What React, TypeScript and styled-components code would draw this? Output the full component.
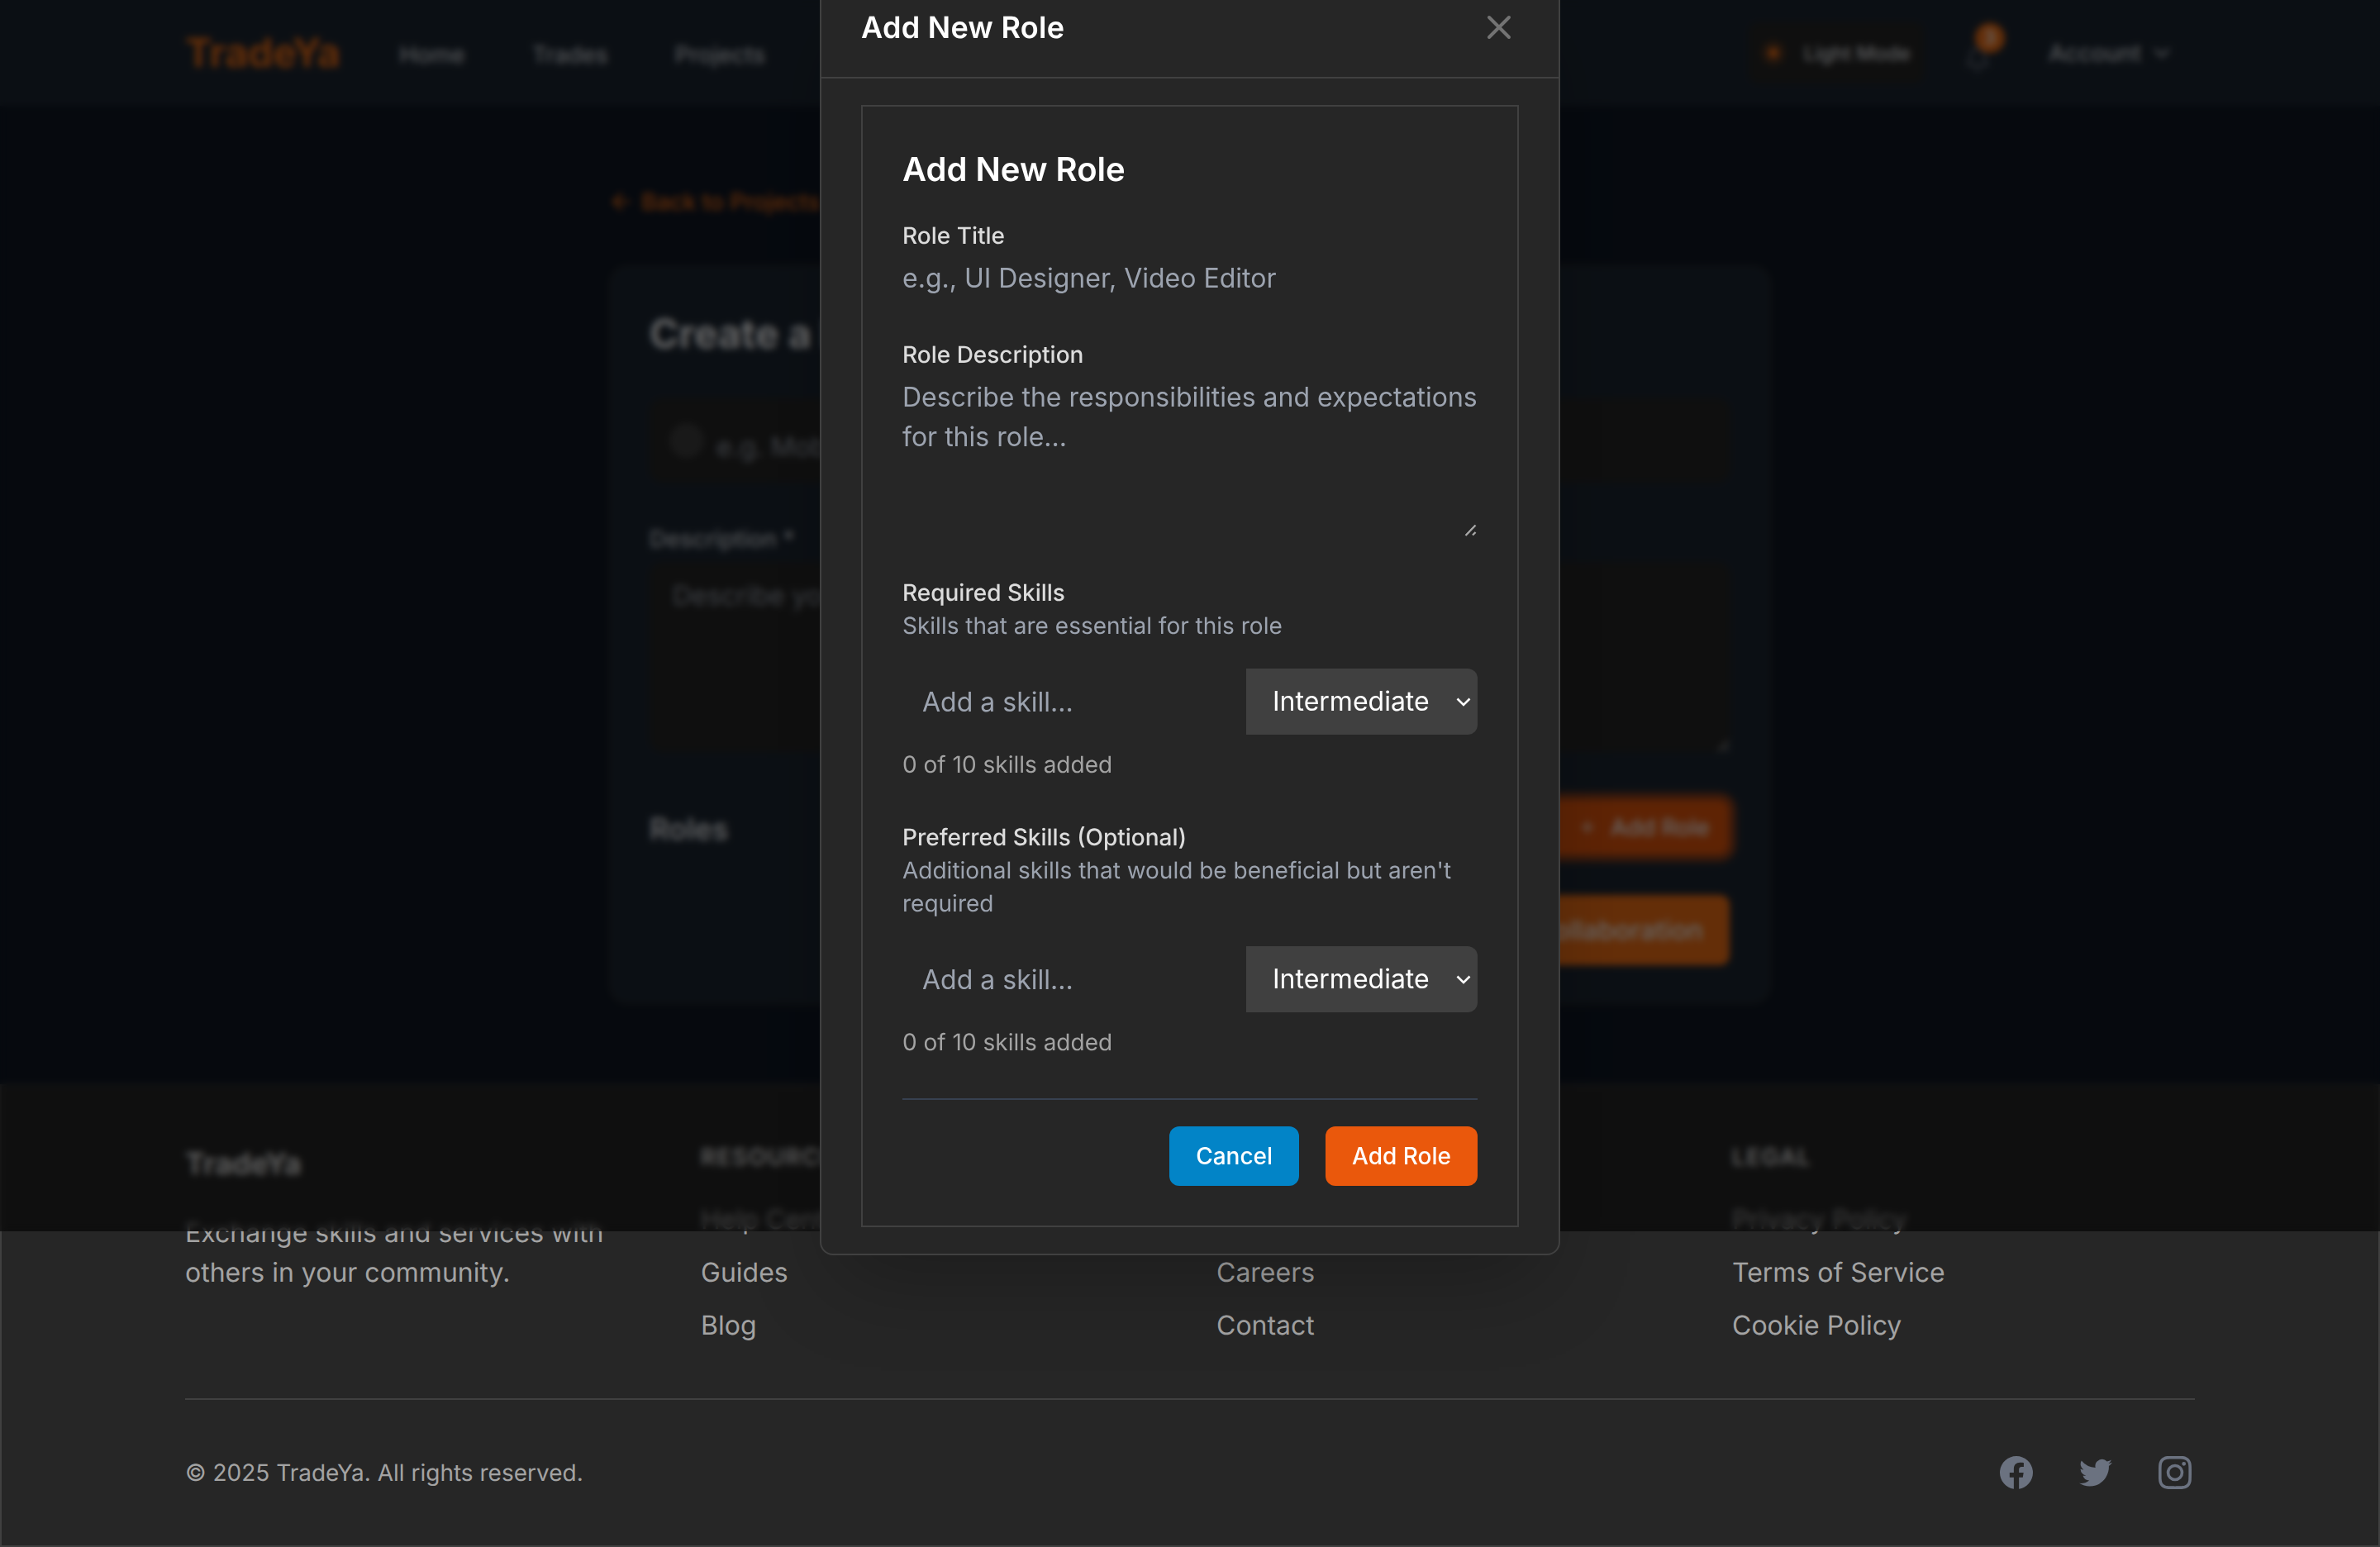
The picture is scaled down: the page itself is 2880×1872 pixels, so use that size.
import { createGlobalStyle, styled } from "styled-components";
import { ArrowLeft, Bell, ChevronDown, Plus, Sun, X } from "lucide-react";

const GlobalStyle = createGlobalStyle`
  html, body {
    margin: 0;
    padding: 0;
    background: #0f1724;
    font-family: Inter, "Liberation Sans", sans-serif;
    text-rendering: geometricPrecision;
  }
  * {
    box-sizing: border-box;
  }
`;

const Page = styled.div`
  width: 2880px;
  height: 1872px;
  display: flex;
  flex-direction: column;
  overflow: hidden;
`;

/* page behind the dialog */
const Nav = styled.header`
  height: 128px;
  flex: none;
  background: #1d2733;
  padding: 0 224px;
  display: flex;
  align-items: center;
  justify-content: space-between;
`;
const NavGroup = styled.div`
  display: flex;
  align-items: center;
`;
const Logo = styled.div`
  font-size: 48px;
  line-height: 64px;
  font-weight: 700;
  color: #f97316;
  margin-right: 72px;
`;
const NavLinks = styled.nav`
  display: flex;
  gap: 81px;
  padding-top: 4px;
`;
const NavLink = styled.a`
  font-size: 28px;
  font-weight: 500;
  line-height: 40px;
  color: #d1d5db;
`;
const ThemeButton = styled.div`
  height: 74px;
  display: flex;
  align-items: center;
  gap: 21px;
  padding: 0 16px 0 14px;
  margin-right: 49px;
  border-radius: 12px;
  background: #262626;
  color: #f97316;
  span {
    font-size: 24px;
    font-weight: 500;
    color: #e5e7eb;
  }
`;
const BellWrap = styled.div`
  position: relative;
  width: 32px;
  height: 32px;
  margin: 16px 70px 0 0;
  color: #6b7280;
`;
const Badge = styled.span`
  position: absolute;
  left: 13px;
  top: -28px;
  width: 36px;
  height: 36px;
  border-radius: 50%;
  background: #f97316;
  color: #fff;
  font-size: 22px;
  font-weight: 600;
  display: flex;
  align-items: center;
  justify-content: center;
`;
const Account = styled.div`
  display: flex;
  align-items: center;
  gap: 9px;
  margin-right: 24px;
  font-size: 28px;
  font-weight: 500;
  color: #d1d5db;
`;

const Main = styled.main`
  flex: 1;
  background: #0f1724;
  padding-top: 96px;
`;
const Column = styled.div`
  width: 1408px;
  margin: 0 auto;
`;
const BackLink = styled.a`
  display: flex;
  align-items: center;
  gap: 8px;
  height: 40px;
  margin-bottom: 56px;
  font-size: 28px;
  font-weight: 500;
  color: #f97316;
`;
const FormCard = styled.section`
  height: 896px;
  border: 2px solid #262626;
  border-radius: 24px;
  background: #1d2733;
  padding: 50px 48px 46px;
  display: flex;
  flex-direction: column;
`;
const FormTitle = styled.h1`
  margin: 0 0 46px;
  font-size: 48px;
  line-height: 64px;
  font-weight: 700;
  color: #f3f4f6;
`;
const TitleField = styled.div`
  height: 102px;
  flex: none;
  border-radius: 16px;
  background: #262626;
  display: flex;
  align-items: center;
  padding: 0 24px;
  gap: 15px;
  margin-bottom: 48px;
`;
const FieldDot = styled.span`
  width: 42px;
  height: 42px;
  flex: none;
  border-radius: 50%;
  background: #404040;
`;
const BlurredPlaceholder = styled.span`
  font-size: 32px;
  color: #9ca3af;
  padding-top: 15px;
`;
const FormLabel = styled.label`
  display: block;
  height: 40px;
  line-height: 40px;
  font-size: 28px;
  font-weight: 500;
  color: #d1d5db;
  margin-bottom: 8px;
`;
const DescriptionField = styled.div`
  position: relative;
  height: 230px;
  flex: none;
  border-radius: 16px;
  background: #262626;
  padding: 17px 28px;
  font-size: 32px;
  line-height: 48px;
  color: #9ca3af;
  margin-bottom: 58px;
`;
const RolesRow = styled.div`
  height: 66px;
  flex: none;
  display: flex;
  align-items: center;
  justify-content: space-between;
  margin-bottom: 49px;
`;
const RolesTitle = styled.h2`
  margin: 4px 0 0;
  font-size: 36px;
  font-weight: 600;
  color: #e5e7eb;
`;
const RoleButton = styled.div`
  height: 66px;
  margin-right: 2px;
  display: flex;
  align-items: center;
  gap: 16px;
  padding: 0 23px 0 37px;
  border-radius: 12px;
  background: #ea580c;
  color: #fff;
  font-size: 28px;
  font-weight: 500;
  box-shadow: 0 0 3px 9px rgba(234, 88, 12, 0.55);
`;
const SubmitRow = styled.div`
  display: flex;
  justify-content: flex-end;
`;
const SubmitButton = styled.div`
  height: 85px;
  margin-right: 1px;
  display: flex;
  align-items: center;
  padding: 0 32px;
  border-radius: 12px;
  background: #f97316;
  color: #fff;
  font-size: 32px;
  font-weight: 500;
`;

const Footer = styled.footer`
  height: 560px;
  flex: none;
  background: #262626;
  border: 2px solid #404040;
  padding: 66px 222px 0;
`;
const FooterGrid = styled.div`
  display: grid;
  grid-template-columns: repeat(4, 560px);
  gap: 64px;
  height: 248px;
`;
const FooterBrand = styled.div`
  font-size: 36px;
  line-height: 56px;
  font-weight: 700;
  color: #e5e5e5;
  margin-bottom: 32px;
`;
const FooterText = styled.p`
  margin: 0;
  font-size: 32px;
  line-height: 48px;
  color: #a3a3a3;
`;
const FooterHeading = styled.div`
  font-size: 28px;
  line-height: 40px;
  font-weight: 600;
  letter-spacing: 1.4px;
  text-transform: uppercase;
  color: #e5e5e5;
  margin-bottom: 32px;
`;
const FooterLinks = styled.div`
  display: flex;
  flex-direction: column;
  gap: 16px;
`;
const FooterLink = styled.a`
  font-size: 32px;
  line-height: 48px;
  color: #a3a3a3;
`;
const FooterBottom = styled.div`
  margin-top: 64px;
  border-top: 2px solid #404040;
  padding-top: 64px;
  display: flex;
  align-items: center;
  justify-content: space-between;
`;
const Copyright = styled.span`
  font-size: 28px;
  line-height: 48px;
  color: #a3a3a3;
`;
const Socials = styled.div`
  display: flex;
  gap: 48px;
  color: #6b7280;
  svg {
    display: block;
    width: 48px;
    height: 48px;
    fill: currentColor;
  }
`;

/* dialog */
const Overlay = styled.div`
  position: fixed;
  left: 0;
  right: 0;
  top: 0;
  height: 1490px;
  background: rgba(0, 0, 0, 0.6);
  backdrop-filter: blur(4px);
  display: flex;
  align-items: center;
  justify-content: center;
`;
const Modal = styled.div`
  width: 896px;
  flex: none;
  background: #262626;
  border: 2px solid #404040;
  border-radius: 16px;
  box-shadow: 0 50px 100px -24px rgba(0, 0, 0, 0.25);
`;
const ModalHeader = styled.div`
  display: flex;
  align-items: center;
  justify-content: space-between;
  padding: 32px 48px;
  border-bottom: 2px solid #404040;
`;
const ModalTitle = styled.h2`
  margin: 0;
  font-size: 36px;
  line-height: 56px;
  font-weight: 600;
  letter-spacing: 0.3px;
  color: #fff;
`;
const CloseButton = styled.button`
  width: 48px;
  height: 48px;
  padding: 0;
  border: 0;
  background: none;
  color: #737373;
  svg {
    display: block;
  }
`;
const ModalBody = styled.div`
  padding: 32px 48px;
`;
const RoleCard = styled.form`
  border: 2px solid #404040;
  padding: 48px;
`;
const RoleHeading = styled.h3`
  margin: 0 0 32px;
  font-size: 40px;
  line-height: 56px;
  font-weight: 600;
  color: #fff;
`;
const Field = styled.div`
  margin-bottom: 48px;
`;
const Label = styled.label<{ $tight?: boolean }>`
  display: block;
  font-size: 28px;
  line-height: 40px;
  font-weight: 500;
  color: #dcdcdc;
  margin-bottom: ${(p) => (p.$tight ? "0" : "8px")};
`;
const Hint = styled.p`
  margin: 0 0 32px;
  font-size: 28px;
  line-height: 40px;
  color: #9ca3af;
`;
const TextInput = styled.input`
  display: block;
  width: 100%;
  height: 48px;
  padding: 0;
  border: 0;
  outline: 0;
  background: transparent;
  font: 400 32px/48px Inter, sans-serif;
  color: #fff;
  &::placeholder {
    color: #9ca3af;
    opacity: 1;
  }
`;
const TextAreaWrap = styled.div`
  position: relative;
  height: 192px;
`;
const TextArea = styled.textarea`
  display: block;
  width: 100%;
  height: 192px;
  padding: 0;
  border: 0;
  outline: 0;
  resize: none;
  background: transparent;
  font: 400 32px/48px Inter, sans-serif;
  color: #fff;
  &::placeholder {
    color: #9ca3af;
    opacity: 1;
  }
`;
const ResizeGrip = styled.svg`
  position: absolute;
  right: 0;
  bottom: -1px;
  width: 16px;
  height: 16px;
`;
const SkillRow = styled.div`
  display: flex;
  height: 80px;
`;
const SkillInput = styled(TextInput)`
  flex: 1;
  min-width: 0;
  height: 80px;
  padding: 0 24px;
`;
const SelectWrap = styled.div`
  position: relative;
  width: 280px;
  flex: none;
`;
const LevelSelect = styled.select`
  display: block;
  width: 100%;
  height: 80px;
  padding: 0 0 0 32px;
  border: 0;
  outline: 0;
  appearance: none;
  border-radius: 0 12px 12px 0;
  background: #404040;
  color: #fff;
  font: 400 32px/48px Inter, sans-serif;
`;
const SelectArrow = styled.svg`
  position: absolute;
  right: 8px;
  top: 35px;
  width: 18px;
  height: 11px;
  pointer-events: none;
`;
const Count = styled.p`
  margin: 16px 0 0;
  font-size: 28px;
  line-height: 40px;
  color: #a3a3a3;
`;
const ModalActions = styled.div`
  border-top: 2px solid #374151;
  padding-top: 32px;
  display: flex;
  justify-content: flex-end;
  gap: 32px;
`;
const ActionButton = styled.button<{ $primary?: boolean }>`
  height: 72px;
  padding: 0 32px;
  border: 0;
  border-radius: 12px;
  background: ${(p) => (p.$primary ? "#ea580c" : "#0284c7")};
  color: #fff;
  font: 500 28px/40px Inter, sans-serif;
`;

const footerColumns = [
  { title: "Resources", links: ["Help Center", "Guides", "Blog"] },
  { title: "Company", links: ["About", "Careers", "Contact"] },
  { title: "Legal", links: ["Privacy Policy", "Terms of Service", "Cookie Policy"] },
];

const Grip = () => (
  <ResizeGrip viewBox="0 0 16 16" fill="none">
    <path d="M0.5 13L12.5 0.5" stroke="#171717" strokeWidth="1" />
    <path d="M1.5 14L13.5 1.5" stroke="#a8a8a8" strokeWidth="2.4" />
    <path d="M9 12.5l3.5-3.5" stroke="#171717" strokeWidth="1" />
    <path d="M10 13.5l3.5-3.5" stroke="#a8a8a8" strokeWidth="2.4" />
  </ResizeGrip>
);

const SkillFields = () => (
  <>
    <SkillRow>
      <SkillInput placeholder="Add a skill..." />
      <SelectWrap>
        <LevelSelect defaultValue="Intermediate">
          <option>Beginner</option>
          <option>Intermediate</option>
          <option>Expert</option>
        </LevelSelect>
        <SelectArrow viewBox="0 0 18 11" fill="none" stroke="#fff" strokeWidth="2.6">
          <path d="M1.5 1.5L9 9l7.5-7.5" />
        </SelectArrow>
      </SelectWrap>
    </SkillRow>
    <Count>0 of 10 skills added</Count>
  </>
);

const App = () => {
  return (
    <Page>
      <GlobalStyle />
      <Nav>
        <NavGroup>
          <Logo>TradeYa</Logo>
          <NavLinks>
            <NavLink>Home</NavLink>
            <NavLink>Trades</NavLink>
            <NavLink>Projects</NavLink>
          </NavLinks>
        </NavGroup>
        <NavGroup>
          <ThemeButton>
            <Sun size={32} fill="currentColor" />
            <span>Light Mode</span>
          </ThemeButton>
          <BellWrap>
            <Bell size={32} />
            <Badge>3</Badge>
          </BellWrap>
          <Account>
            Account
            <ChevronDown size={32} />
          </Account>
        </NavGroup>
      </Nav>

      <Main>
        <Column>
          <BackLink>
            <ArrowLeft size={32} />
            Back to Projects
          </BackLink>
          <FormCard>
            <FormTitle>Create a New</FormTitle>
            <TitleField>
              <FieldDot />
              <BlurredPlaceholder>e.g. Mobile App Development</BlurredPlaceholder>
            </TitleField>
            <FormLabel>Description *</FormLabel>
            <DescriptionField>
              Describe your
              <Grip />
            </DescriptionField>
            <RolesRow>
              <RolesTitle>Roles</RolesTitle>
              <RoleButton>
                <Plus size={24} />
                Add Role
              </RoleButton>
            </RolesRow>
            <SubmitRow>
              <SubmitButton>Create Collaboration</SubmitButton>
            </SubmitRow>
          </FormCard>
        </Column>
      </Main>

      <Footer>
        <FooterGrid>
          <div>
            <FooterBrand>TradeYa</FooterBrand>
            <FooterText>
              Exchange skills and services with
              <br />
              others in your community.
            </FooterText>
          </div>
          {footerColumns.map((col) => (
            <div key={col.title}>
              <FooterHeading>{col.title}</FooterHeading>
              <FooterLinks>
                {col.links.map((link) => (
                  <FooterLink key={link}>{link}</FooterLink>
                ))}
              </FooterLinks>
            </div>
          ))}
        </FooterGrid>
        <FooterBottom>
          <Copyright>© 2025 TradeYa. All rights reserved.</Copyright>
          <Socials>
            <svg viewBox="0 0 24 24">
              <path
                fillRule="evenodd"
                clipRule="evenodd"
                d="M22 12c0-5.523-4.477-10-10-10S2 6.477 2 12c0 4.991 3.657 9.128 8.438 9.878v-6.987h-2.54V12h2.54V9.797c0-2.506 1.492-3.89 3.777-3.89 1.094 0 2.238.195 2.238.195v2.46h-1.26c-1.243 0-1.63.771-1.63 1.562V12h2.773l-.443 2.89h-2.33v6.988C18.343 21.128 22 16.991 22 12z"
              />
            </svg>
            <svg viewBox="0 0 24 24">
              <path d="M8.29 20.251c7.547 0 11.675-6.253 11.675-11.675 0-.178 0-.355-.012-.53A8.348 8.348 0 0022 5.92a8.19 8.19 0 01-2.357.646 4.118 4.118 0 001.804-2.27 8.224 8.224 0 01-2.605.996 4.107 4.107 0 00-6.993 3.743 11.65 11.65 0 01-8.457-4.287 4.106 4.106 0 001.27 5.477A4.072 4.072 0 012.8 9.713v.052a4.105 4.105 0 003.292 4.022 4.095 4.095 0 01-1.853.07 4.108 4.108 0 003.834 2.85A8.233 8.233 0 012 18.407a11.616 11.616 0 006.29 1.84" />
            </svg>
            <svg viewBox="0 0 24 24">
              <path
                fillRule="evenodd"
                clipRule="evenodd"
                d="M12.315 2c2.43 0 2.784.013 3.808.06 1.064.049 1.791.218 2.427.465a4.902 4.902 0 011.772 1.153 4.902 4.902 0 011.153 1.772c.247.636.416 1.363.465 2.427.048 1.067.06 1.407.06 4.123v.08c0 2.643-.012 2.987-.06 4.043-.049 1.064-.218 1.791-.465 2.427a4.902 4.902 0 01-1.153 1.772 4.902 4.902 0 01-1.772 1.153c-.636.247-1.363.416-2.427.465-1.067.048-1.407.06-4.123.06h-.08c-2.643 0-2.987-.012-4.043-.06-1.064-.049-1.791-.218-2.427-.465a4.902 4.902 0 01-1.772-1.153 4.902 4.902 0 01-1.153-1.772c-.247-.636-.416-1.363-.465-2.427-.047-1.024-.06-1.379-.06-3.808v-.63c0-2.43.013-2.784.06-3.808.049-1.064.218-1.791.465-2.427a4.902 4.902 0 011.153-1.772A4.902 4.902 0 015.45 2.525c.636-.247 1.363-.416 2.427-.465C8.901 2.013 9.256 2 11.685 2h.63zm-.081 1.802h-.468c-2.456 0-2.784.011-3.807.058-.975.045-1.504.207-1.857.344-.467.182-.8.398-1.15.748-.35.35-.566.683-.748 1.15-.137.353-.3.882-.344 1.857-.047 1.023-.058 1.351-.058 3.807v.468c0 2.456.011 2.784.058 3.807.045.975.207 1.504.344 1.857.182.466.399.8.748 1.15.35.35.683.566 1.15.748.353.137.882.3 1.857.344 1.054.048 1.37.058 4.041.058h.08c2.597 0 2.917-.01 3.96-.058.976-.045 1.505-.207 1.858-.344.466-.182.8-.398 1.15-.748.35-.35.566-.683.748-1.15.137-.353.3-.882.344-1.857.048-1.055.058-1.37.058-4.041v-.08c0-2.597-.01-2.917-.058-3.96-.045-.976-.207-1.505-.344-1.858a3.097 3.097 0 00-.748-1.15 3.098 3.098 0 00-1.15-.748c-.353-.137-.882-.3-1.857-.344-1.023-.047-1.351-.058-3.807-.058zM12 6.865a5.135 5.135 0 110 10.27 5.135 5.135 0 010-10.27zm0 1.802a3.333 3.333 0 100 6.666 3.333 3.333 0 000-6.666zm5.338-3.205a1.2 1.2 0 110 2.4 1.2 1.2 0 010-2.4z"
              />
            </svg>
          </Socials>
        </FooterBottom>
      </Footer>

      <Overlay>
        <Modal>
          <ModalHeader>
            <ModalTitle>Add New Role</ModalTitle>
            <CloseButton aria-label="Close">
              <X size={48} />
            </CloseButton>
          </ModalHeader>
          <ModalBody>
            <RoleCard>
              <RoleHeading>Add New Role</RoleHeading>
              <Field>
                <Label>Role Title</Label>
                <TextInput placeholder="e.g., UI Designer, Video Editor" />
              </Field>
              <Field>
                <Label>Role Description</Label>
                <TextAreaWrap>
                  <TextArea placeholder="Describe the responsibilities and expectations for this role..." />
                  <Grip />
                </TextAreaWrap>
              </Field>
              <Field>
                <Label $tight>Required Skills</Label>
                <Hint>Skills that are essential for this role</Hint>
                <SkillFields />
              </Field>
              <Field>
                <Label $tight>Preferred Skills (Optional)</Label>
                <Hint>Additional skills that would be beneficial but aren't required</Hint>
                <SkillFields />
              </Field>
              <ModalActions>
                <ActionButton type="button">Cancel</ActionButton>
                <ActionButton type="button" $primary>
                  Add Role
                </ActionButton>
              </ModalActions>
            </RoleCard>
          </ModalBody>
        </Modal>
      </Overlay>
    </Page>
  );
};

export default App;
